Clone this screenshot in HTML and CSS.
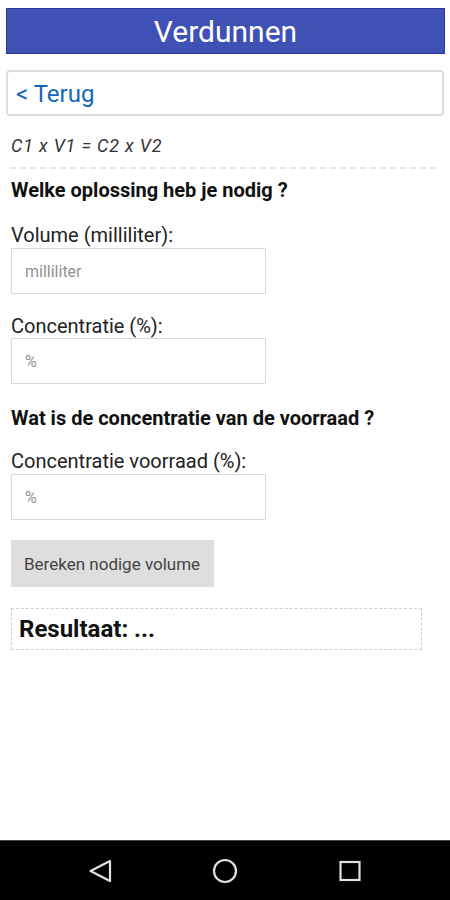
FILE: index.html
```html
<!DOCTYPE html>
<html lang="nl">
<head>
<meta charset="utf-8">
<title>Verdunnen</title>
<link rel="stylesheet" href="styles.css">
</head>
<body>
<div class="screen">
  <main class="content">
    <header class="title-bar">Verdunnen</header>
    <a class="back" href="#">&lt; Terug</a>
    <p class="formula">C1 x V1 = C2 x V2</p>
    <hr class="divider">
    <h2 class="question q1">Welke oplossing heb je nodig ?</h2>
    <label class="label l1">Volume (milliliter):</label>
    <input class="field" type="text" placeholder="milliliter">
    <label class="label l2">Concentratie (%):</label>
    <input class="field f2" type="text" placeholder="%">
    <h2 class="question q2">Wat is de concentratie van de voorraad ?</h2>
    <label class="label l3">Concentratie voorraad (%):</label>
    <input class="field" type="text" placeholder="%">
    <button class="calc" type="button">Bereken nodige volume</button>
    <div class="result">Resultaat: ...</div>
  </main>
  <nav class="navbar">
    <svg class="nav-icon" viewBox="0 0 26 26" width="26" height="26"><path d="M23 3 L3.5 13 L23 23 Z" fill="none" stroke="#e2e2e2" stroke-width="2.2" stroke-linejoin="round"/></svg>
    <svg class="nav-icon" viewBox="0 0 26 26" width="26" height="26"><circle cx="13" cy="13" r="11" fill="none" stroke="#e2e2e2" stroke-width="2.2"/></svg>
    <svg class="nav-icon" viewBox="0 0 26 26" width="26" height="26"><rect x="3.5" y="4" width="19" height="18" fill="none" stroke="#e2e2e2" stroke-width="2.2"/></svg>
  </nav>
</div>
</body>
</html>
```
FILE: styles.css
```css
html, body {
  margin: 0;
  padding: 0;
  background: #ffffff;
}
body {
  font-family: Roboto, "Noto Sans", sans-serif;
  color: #222;
}
.screen {
  width: 450px;
  height: 900px;
  display: flex;
  flex-direction: column;
}
.content {
  flex: 1;
  display: flex;
  flex-direction: column;
  align-items: flex-start;
  padding: 8px 5px 0 6px;
}
.title-bar {
  align-self: stretch;
  box-sizing: border-box;
  height: 46px;
  background: #3f51b5;
  border: 1px solid #2a3a9e;
  color: #fff;
  font-size: 30px;
  line-height: 42px;
  padding-top: 2px;
  text-align: center;
}
.back {
  align-self: stretch;
  margin: 16px 1px 0 0;
  box-sizing: border-box;
  height: 46px;
  border: 2px solid #dcdcdc;
  border-radius: 4px;
  color: #1565c0;
  text-decoration: none;
  font-size: 24px;
  line-height: 39px;
  padding: 3px 0 0 8px;
}
.formula {
  margin: 20px 0 0 5px;
  font-size: 18px;
  line-height: 20px;
  letter-spacing: 0.8px;
  font-style: italic;
  color: #333;
}
.divider {
  align-self: stretch;
  margin: 11px 9px 0 4px;
  border: 0;
  border-top: 2px dashed #e0e8e5;
  height: 0;
}
.question {
  margin: 0 0 0 5px;
  font-size: 20px;
  line-height: 24px;
  font-weight: bold;
  color: #111;
}
.q1 { margin-top: 9px; }
.q2 { margin-top: 22px; }
.label {
  margin: 0 0 0 5px;
  font-size: 20px;
  line-height: 24px;
  color: #222;
}
.l1 { margin-top: 21px; }
.l2 { margin-top: 20px; }
.l3 { margin-top: 19px; }
.field {
  margin: 1px 0 0 5px;
  box-sizing: border-box;
  width: 255px;
  height: 46px;
  border: 1px solid #dadada;
  border-radius: 0;
  padding: 0 13px;
  font-family: Roboto, "Noto Sans", sans-serif;
  font-size: 16px;
  background: #fff;
  outline: none;
}
.f2 { margin-top: 0; }
.field::placeholder {
  color: #929292;
}
.calc {
  margin: 20px 0 0 5px;
  width: 203px;
  height: 47px;
  border: 0;
  background: #dedede;
  color: #444;
  font-family: Roboto, "Noto Sans", sans-serif;
  font-size: 17px;
  text-align: left;
  padding: 0 0 0 13px;
}
.result {
  margin: 21px 0 0 5px;
  box-sizing: border-box;
  width: 411px;
  height: 42px;
  border: 1px dashed #d0d0d0;
  font-size: 24px;
  font-weight: bold;
  color: #111;
  line-height: 40px;
  padding-left: 7px;
}
.navbar {
  box-sizing: border-box;
  height: 60px;
  background: #000;
  border-top: 1px solid #444;
  display: flex;
  align-items: center;
  justify-content: center;
  gap: 99px;
}
.nav-icon {
  display: block;
}
```
